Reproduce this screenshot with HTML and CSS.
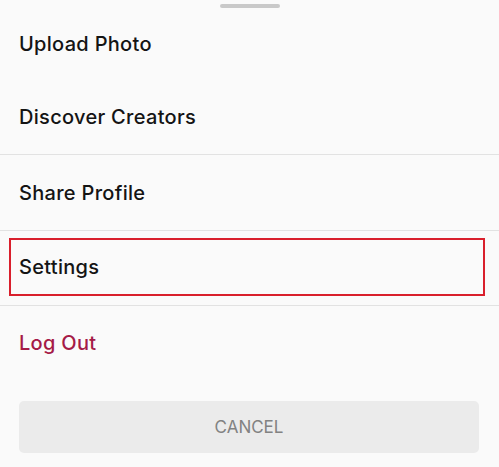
FILE: index.html
```html
<!DOCTYPE html>
<html lang="en">
<head>
    <meta charset="UTF-8">
    <title>Profile menu</title>
    <link rel="stylesheet" href="styles.css">
</head>
<body>
    <div class="sheet">
        <div class="handle"></div>
        <ul class="menu">
            <li class="item first">Upload Photo</li>
            <li class="item">Discover Creators</li>
            <li class="item line tall">Share Profile</li>
            <li class="item line highlight">
                <span class="mark">Settings</span>
            </li>
            <li class="item line danger">Log Out</li>
        </ul>
        <button class="cancel" type="button">CANCEL</button>
    </div>
</body>
</html>
```

FILE: styles.css
```css
body {
    margin: 0;
    background: #fafafa;
    font-family: Inter, "Noto Sans", sans-serif;
    color: #141414;
}
.sheet {
    display: flex;
    flex-direction: column;
    padding-top: 4px;
}
.handle {
    width: 60px;
    height: 4px;
    border-radius: 3px;
    background: #c9c9c9;
    margin: 0 auto;
}
.menu {
    list-style: none;
    margin: 0;
    padding: 0;
}
.item {
    height: 75px;
    display: flex;
    align-items: center;
    padding-left: 19px;
    font-size: 20px;
    font-weight: 500;
    letter-spacing: 0.3px;
    box-sizing: border-box;
}
.item.first {
    height: 71px;
}
.item.tall {
    height: 76px;
}
.item.line {
    border-top: 1px solid #e2e2e2;
}
.highlight {
    padding: 7px 14px 9px 9px;
    align-items: stretch;
}
.mark {
    flex: 1;
    display: flex;
    align-items: center;
    padding-left: 8px;
    border: 2px solid #d91f2c;
}
.danger {
    color: #a51a47;
}
.cancel {
    margin: 21px 20px 0 19px;
    height: 52px;
    border: none;
    border-radius: 5px;
    background: #ebebeb;
    color: #828282;
    font-family: Inter, "Noto Sans", sans-serif;
    font-size: 17px;
}
```
